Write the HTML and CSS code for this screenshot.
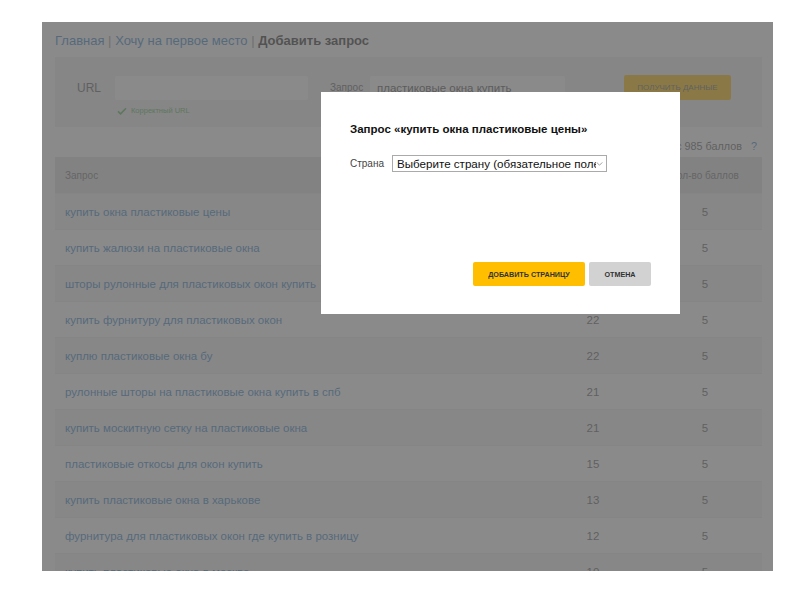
FILE: index.html
```html
<!DOCTYPE html>
<html lang="ru">
<head>
<meta charset="utf-8">
<title>Добавить запрос</title>
<link rel="stylesheet" href="styles.css">
</head>
<body>
<div class="frame">
  <div class="page">
    <div class="crumbs"><a href="#">Главная</a> <span class="sep">|</span> <a href="#">Хочу на первое место</a> <span class="sep">|</span> <b>Добавить запрос</b></div>
    <div class="panel">
      <label class="lbl lbl-url">URL</label>
      <div class="field-col">
        <div class="input input-url"></div>
        <div class="ok"><svg class="ok-ic" viewBox="0 0 12 10" width="10" height="8"><path d="M1 5.5 L4.3 8.5 L11 1.5" fill="none" stroke="#5cb85c" stroke-width="2"/></svg>Корректный URL</div>
      </div>
      <label class="lbl lbl-q">Запрос</label>
      <div class="input input-q">пластиковые окна купить</div>
      <button class="btn-get">получить данные</button>
    </div>
    <div class="balance">У вас 985 баллов <span class="help">?</span></div>
    <div class="table">
      <div class="tr th"><div class="c1">Запрос</div><div class="c2">Частота</div><div class="c3">Кол-во баллов</div></div>
      <div class="tr odd"><div class="c1"><a href="#">купить окна пластиковые цены</a></div><div class="c2">46</div><div class="c3">5</div></div>
      <div class="tr"><div class="c1"><a href="#">купить жалюзи на пластиковые окна</a></div><div class="c2">32</div><div class="c3">5</div></div>
      <div class="tr odd"><div class="c1"><a href="#">шторы рулонные для пластиковых окон купить</a></div><div class="c2">24</div><div class="c3">5</div></div>
      <div class="tr"><div class="c1"><a href="#">купить фурнитуру для пластиковых окон</a></div><div class="c2">22</div><div class="c3">5</div></div>
      <div class="tr odd"><div class="c1"><a href="#">куплю пластиковые окна бу</a></div><div class="c2">22</div><div class="c3">5</div></div>
      <div class="tr"><div class="c1"><a href="#">рулонные шторы на пластиковые окна купить в спб</a></div><div class="c2">21</div><div class="c3">5</div></div>
      <div class="tr odd"><div class="c1"><a href="#">купить москитную сетку на пластиковые окна</a></div><div class="c2">21</div><div class="c3">5</div></div>
      <div class="tr"><div class="c1"><a href="#">пластиковые откосы для окон купить</a></div><div class="c2">15</div><div class="c3">5</div></div>
      <div class="tr odd"><div class="c1"><a href="#">купить пластиковые окна в харькове</a></div><div class="c2">13</div><div class="c3">5</div></div>
      <div class="tr"><div class="c1"><a href="#">фурнитура для пластиковых окон где купить в розницу</a></div><div class="c2">12</div><div class="c3">5</div></div>
      <div class="tr odd"><div class="c1"><a href="#">купить пластиковые окна в москве</a></div><div class="c2">10</div><div class="c3">5</div></div>
    </div>
  </div>
  <div class="backdrop"></div>
  <div class="modal">
    <div class="modal-title">Запрос «купить окна пластиковые цены»</div>
    <div class="modal-row">
      <span class="modal-lbl">Страна</span>
      <div class="select" role="combobox">
        <span class="select-text">Выберите страну (обязательное поле)</span>
        <svg class="chev" viewBox="0 0 8 5" width="7" height="4"><path d="M0.5 0.5 L4 4 L7.5 0.5" fill="none" stroke="#888" stroke-width="1"/></svg>
      </div>
    </div>
    <div class="modal-actions">
      <button class="btn btn-add">Добавить страницу</button>
      <button class="btn btn-cancel">Отмена</button>
    </div>
  </div>
</div>
</body>
</html>
```

FILE: styles.css
```css
* { box-sizing: border-box; }
html, body { margin: 0; padding: 0; background: #fff; }
body { font-family: "Liberation Sans", Arial, sans-serif; color: #333; }
a { color: #3d87c8; text-decoration: none; }

.frame {
  position: relative;
  width: 731px;
  height: 549px;
  margin: 22px 0 0 42px;
  overflow: hidden;
  background: #fff;
}
.page { padding: 9px 11px 0 13px; }

.crumbs { font-size: 13px; line-height: 20px; height: 20px; margin-bottom: 6px; white-space: nowrap; }
.crumbs .sep { color: #999; }
.crumbs b { color: #333; }

.panel {
  height: 70px;
  background: #efefef;
  display: flex;
  align-items: flex-start;
  padding: 19px 0 0 22px;
}
.lbl { font-size: 11px; line-height: 24px; color: #666; }
.lbl-url { width: 38px; font-size: 12px; }
.lbl-q { width: 40px; margin-left: 22px; font-size: 10px; }
.field-col { width: 193px; }
.input { height: 24px; background: #fff; border-radius: 2px; font-size: 11.5px; line-height: 24px; padding-left: 7px; color: #555; }
.input-url { width: 193px; }
.input-q { width: 195px; }
.ok { font-size: 7.5px; color: #5cb85c; margin-top: 6px; padding-left: 2px; display: flex; align-items: center; gap: 4px; }
.ok-ic { display: block; }
.btn-get {
  margin-left: 59px;
  width: 107px;
  height: 25px;
  border: 0;
  border-radius: 2px;
  background: #ffc107;
  color: #666;
  font-family: inherit;
  font-size: 8px;
  text-transform: uppercase;
  margin-top: -1px;
  padding: 0;
}

.balance {
  margin-top: 9px;
  height: 20px;
  line-height: 20px;
  text-align: right;
  font-size: 10.8px;
  color: #666;
  padding-right: 5px;
  margin-bottom: 1px;
}
.balance .help { color: #3d87c8; margin-left: 6px; }

.table { font-size: 11.5px; }
.tr { display: flex; height: 36px; align-items: center; border-top: 1px solid #ececec; }
.tr.th { background: #e2e2e2; color: #777; font-size: 10px; border-top: 0; }
.tr.odd { background: #f3f3f3; }
.c1 { flex: 1; padding-left: 10px; white-space: nowrap; }
.c2 { width: 110px; text-align: center; color: #666; }
.c3 { width: 114px; text-align: center; color: #666; }
.tr.th .c2, .tr.th .c3 { color: #777; }

.backdrop {
  position: absolute;
  inset: 0;
  background: rgba(94, 94, 94, 0.73);
}

.modal {
  position: absolute;
  left: 279px;
  top: 70px;
  width: 359px;
  height: 222px;
  background: #fff;
  padding: 29px 29px 28px 29px;
  display: flex;
  flex-direction: column;
  color: #111;
}
.modal-title { font-size: 11.5px; font-weight: bold; line-height: 16px; color: #111; }
.modal-row { display: flex; align-items: center; margin-top: 18px; }
.modal-lbl { width: 42px; font-size: 10px; color: #444; }
.select {
  position: relative;
  width: 215px;
  height: 17px;
  border: 1px solid #aaa;
  background: #fff;
  padding: 0 10px 0 4px;
  overflow: hidden;
}
.select-text {
  display: block;
  font-size: 11.6px;
  line-height: 15px;
  white-space: nowrap;
  overflow: hidden;
  color: #111;
}
.chev { position: absolute; right: 3px; top: 6px; }
.modal-actions { margin-top: auto; display: flex; justify-content: flex-end; gap: 4px; }
.btn {
  height: 24px;
  border: 0;
  border-radius: 2px;
  font-family: inherit;
  font-size: 7.2px;
  font-weight: bold;
  text-transform: uppercase;
  color: #333;
  padding: 0;
}
.btn-add { width: 112px; background: #ffbf00; }
.btn-cancel { width: 62px; background: #d2d2d2; }
```
